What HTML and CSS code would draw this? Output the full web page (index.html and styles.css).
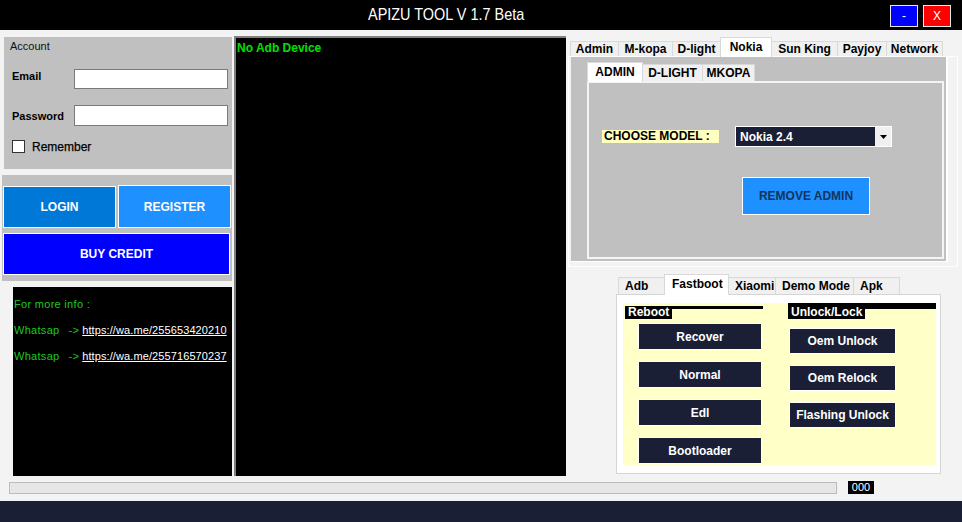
FILE: index.html
```html
<!DOCTYPE html>
<html>
<head>
<meta charset="utf-8">
<title>APIZU TOOL</title>
<link rel="stylesheet" href="styles.css">
</head>
<body>
<header class="titlebar">
  <span class="title">APIZU TOOL V 1.7 Beta</span>
  <div class="winbtns">
    <span class="wb wb-min">-</span>
    <span class="wb wb-close">X</span>
  </div>
</header>
<main class="main">
  <section class="leftcol">
    <div class="account">
      <div class="acc-title">Account</div>
      <div class="frow frow-email"><span class="flabel">Email</span><span class="finput"></span></div>
      <div class="frow frow-pass"><span class="flabel">Password</span><span class="finput"></span></div>
      <div class="crow"><span class="cbox"></span><span class="clabel">Remember</span></div>
    </div>
    <div class="actions">
      <button class="btn btn-login">LOGIN</button>
      <button class="btn btn-register">REGISTER</button>
      <button class="btn btn-buy">BUY CREDIT</button>
    </div>
    <div class="info">
      <p class="info-line">For more info :</p>
      <p class="info-line"><span>Whatsap</span><span class="arrow">-&gt;</span><span class="link">https://wa.me/255653420210</span></p>
      <p class="info-line"><span>Whatsap</span><span class="arrow">-&gt;</span><span class="link">https://wa.me/255716570237</span></p>
    </div>
  </section>

  <section class="console">
    <div class="console-text">No Adb Device</div>
  </section>

  <section class="rightcol">
    <div class="tabctl tabctl-top">
      <div class="tabstrip strip-top">
        <span class="tab w-admin">Admin</span>
        <span class="tab w-mkopa">M-kopa</span>
        <span class="tab w-dlight">D-light</span>
        <span class="tab tab-sel w-nokia">Nokia</span>
        <span class="tab w-sunking">Sun King</span>
        <span class="tab w-payjoy">Payjoy</span>
        <span class="tab w-network">Network</span>
      </div>
      <div class="page-top">
        <div class="gray-panel">
          <div class="tabstrip strip-inner">
            <span class="tab tab-sel itab w-iadmin">ADMIN</span>
            <span class="tab itab w-idlight">D-LIGHT</span>
            <span class="tab itab w-imkopa">MKOPA</span>
          </div>
          <div class="inner-page">
            <div class="model-row">
              <span class="model-label">CHOOSE MODEL :</span>
              <div class="combo">
                <span class="combo-text">Nokia 2.4</span>
                <span class="combo-arrow"><svg width="7" height="4" viewBox="0 0 7 4"><path d="M0 0h7L3.5 4z" fill="#000"/></svg></span>
              </div>
            </div>
            <button class="btn-remove">REMOVE ADMIN</button>
          </div>
        </div>
      </div>
    </div>

    <div class="tabctl tabctl-bottom">
      <div class="tabstrip strip-bottom">
        <span class="tab w-adb">Adb</span>
        <span class="tab tab-sel w-fastboot">Fastboot</span>
        <span class="tab w-xiaomi">Xiaomi</span>
        <span class="tab w-demo">Demo Mode</span>
        <span class="tab w-apk">Apk</span>
      </div>
      <div class="page-bottom">
        <div class="yellow">
          <div class="group group-reboot">
            <div class="ghead"><span class="glabel">Reboot</span><span class="gline"></span></div>
            <div class="gbtns">
              <button class="nbtn">Recover</button>
              <button class="nbtn">Normal</button>
              <button class="nbtn">Edl</button>
              <button class="nbtn">Bootloader</button>
            </div>
          </div>
          <div class="group group-unlock">
            <div class="ghead"><span class="glabel">Unlock/Lock</span><span class="gline"></span></div>
            <div class="gbtns">
              <button class="nbtn">Oem Unlock</button>
              <button class="nbtn">Oem Relock</button>
              <button class="nbtn">Flashing Unlock</button>
            </div>
          </div>
        </div>
      </div>
    </div>
  </section>
</main>
<div class="progress-row">
  <div class="progress"></div>
  <span class="counter">000</span>
</div>
<footer class="footer"></footer>
</body>
</html>
```

FILE: styles.css
```css
* { box-sizing: border-box; }
html, body { margin: 0; padding: 0; }
body {
  width: 962px;
  height: 522px;
  overflow: hidden;
  background: #f3f3f3;
  font-family: "Liberation Sans", Arial, sans-serif;
  color: #000;
}
button { font-family: inherit; cursor: default; }

/* title bar */
.titlebar {
  height: 30px;
  background: #000;
  display: flex;
  align-items: center;
}
.title {
  color: #fff;
  font-size: 17px;
  margin-left: 368px;
  display: inline-block;
  transform: scaleX(0.85);
  transform-origin: left center;
  white-space: nowrap;
}
.winbtns {
  margin-left: auto;
  margin-right: 11px;
  display: flex;
  gap: 5px;
  align-self: flex-start;
  margin-top: 5px;
}
.wb {
  width: 28px;
  height: 22px;
  color: #fff;
  font-size: 12px;
  display: flex;
  align-items: center;
  justify-content: center;
  border: 1px solid #e8e8e8;
}
.wb-min { background: #0000ff; }
.wb-close { background: #ff0000; }

/* main */
.main {
  height: 446px;
  display: flex;
  align-items: flex-start;
}

.leftcol { width: 233px; flex: none; }
.account {
  margin: 7px 0 0 4px;
  width: 228px;
  height: 132px;
  background: #c0c0c0;
  padding-top: 2px;
}
.acc-title {
  font-size: 11px;
  line-height: 14px;
  padding-left: 6px;
  color: #111;
}
.frow {
  display: flex;
  align-items: center;
  padding-left: 8px;
}
.frow-email { margin-top: 16px; height: 20px; }
.frow-pass { margin-top: 16px; height: 21px; }
.frow-email .flabel { margin-top: -6px; }
.flabel {
  width: 62px;
  font-size: 11px;
  font-weight: bold;
}
.finput {
  width: 154px;
  height: 100%;
  background: #fff;
  border: 1px solid #7a7a7a;
}
.crow {
  margin-top: 14px;
  padding-left: 8px;
  display: flex;
  align-items: center;
  height: 13px;
}
.cbox {
  width: 13px;
  height: 13px;
  background: #fff;
  border: 1px solid #333;
}
.clabel {
  margin-left: 7px;
  font-size: 12px;
  -webkit-text-stroke: 0.25px #000;
}

.actions {
  margin: 6px 0 0 2px;
  width: 230px;
  height: 106px;
  background: #c0c0c0;
  padding: 11px 0 0 1px;
  display: grid;
  grid-template-columns: 113px 113px;
  grid-template-rows: 42px 42px;
  column-gap: 2px;
  row-gap: 5px;
}
.btn {
  border: 1px solid #fff;
  color: #fff;
  font-size: 12px;
  font-weight: bold;
  padding: 0;
  margin: 0;
}
.btn-login { background: #0078d7; }
.btn-register { background: #1e90ff; height: 43px; margin-top: -1px; }
.btn-buy { background: #0000ff; grid-column: 1 / 3; width: 227px; }

.info {
  margin: 6px 0 0 13px;
  width: 219px;
  height: 189px;
  background: #000;
  padding: 11px 0 0 1px;
  color: #1ec81e;
  font-size: 11px;
  letter-spacing: 0.3px;
}
.info-line {
  margin: 0 0 13px 0;
  line-height: 13px;
  white-space: nowrap;
}
.arrow { margin-left: 9px; }
.link {
  margin-left: 3px;
  color: #fff;
  text-decoration: underline;
  letter-spacing: 0.1px;
}

/* console */
.console {
  flex: none;
  margin: 6px 0 0 1px;
  width: 332px;
  height: 440px;
  background: #000;
  border-top: 2px solid #808080;
  border-left: 2px solid #808080;
  padding: 3px 0 0 1px;
}
.console-text {
  color: #00e000;
  font-weight: bold;
  font-size: 12px;
  line-height: 14px;
}

/* right column */
.rightcol {
  flex: none;
  width: 390px;
  margin-left: 2px;
  padding-top: 7px;
}
.tabstrip {
  display: flex;
  align-items: flex-end;
  padding-left: 2px;
  position: relative;
  z-index: 1;
}
.tab {
  height: 15px;
  background: #f0f0f0;
  border: 1px solid #d9d9d9;
  border-bottom: none;
  margin-right: -1px;
  font-size: 12px;
  font-weight: bold;
  display: flex;
  align-items: center;
  justify-content: center;
  white-space: nowrap;
}
.tab-sel {
  background: #fff;
  margin-bottom: -1px;
}
.strip-top { height: 19px; }
.strip-top .tab { height: 15px; }
.strip-top .tab-sel { height: 20px; padding-bottom: 2px; }
.w-admin { width: 49px; }
.w-mkopa { width: 55px; }
.w-dlight { width: 49px; }
.w-nokia { width: 52px; }
.w-sunking { width: 67px; }
.w-payjoy { width: 50px; }
.w-network { width: 57px; }

.page-top {
  width: 390px;
  height: 211px;
  border: 1px solid #fdfdfd;
  padding: 0 9px 4px 2px;
}
.gray-panel {
  height: 100%;
  background: #c0c0c0;
  border-right: 2px solid #fff;
  border-bottom: 1px solid #fff;
  padding: 5px 2px 2px 16px;
}
.strip-inner { height: 19px; padding-left: 0; }
.strip-inner .tab { height: 17px; }
.strip-inner .tab-sel { height: 20px; padding-bottom: 1px; }
.w-iadmin { width: 56px; }
.w-idlight { width: 61px; }
.w-imkopa { width: 53px; }

.inner-page {
  width: 357px;
  height: 178px;
  border: 2px solid #f4f4f4;
  background: #c0c0c0;
  padding: 43px 0 0 13px;
}
.model-row {
  display: flex;
  align-items: center;
  height: 21px;
}
.model-label {
  width: 117px;
  height: 13px;
  line-height: 13px;
  background: #ffffc0;
  font-size: 12px;
  font-weight: bold;
  padding-left: 2px;
  white-space: nowrap;
}
.combo {
  margin-left: 16px;
  width: 157px;
  height: 21px;
  border: 1px solid #fff;
  background: #1a1f36;
  display: flex;
  align-items: center;
}
.combo-text {
  flex: 1;
  color: #fff;
  font-size: 12px;
  font-weight: bold;
  padding-left: 4px;
}
.combo-arrow {
  width: 16px;
  height: 100%;
  background: #f0f0f0;
  display: flex;
  align-items: center;
  justify-content: center;
}
.btn-remove {
  display: block;
  margin: 30px 0 0 140px;
  width: 128px;
  height: 38px;
  background: #1e90ff;
  border: 1px solid #fff;
  color: #103560;
  font-size: 12px;
  font-weight: bold;
  padding: 0;
}

/* bottom tabs */
.tabctl-bottom {
  margin: 7px 0 0 48px;
  width: 325px;
}
.strip-bottom { height: 20px; }
.strip-bottom .tab { height: 17px; justify-content: flex-start; padding-left: 6px; }
.strip-bottom .tab-sel { height: 21px; padding-bottom: 3px; padding-left: 7px; }
.w-adb { width: 47px; }
.w-fastboot { width: 65px; }
.w-xiaomi { width: 48px; }
.w-demo { width: 79px; }
.w-apk { width: 47px; }

.page-bottom {
  width: 325px;
  height: 180px;
  background: #fff;
  border: 1px solid #d5d5d5;
  padding: 8px 4px 8px 6px;
}
.yellow {
  height: 162px;
  background: #ffffc8;
  display: flex;
  align-items: flex-start;
  padding-left: 2px;
}
.group-reboot { width: 138px; margin-top: 3px; }
.group-unlock { width: 148px; margin-left: 25px; }
.ghead {
  display: flex;
  align-items: flex-start;
}
.glabel {
  background: #000;
  color: #fff;
  font-size: 12px;
  font-weight: bold;
  white-space: nowrap;
  padding: 0 3px 0 3px;
}
.gline { flex: 1; background: #000; }
.group-reboot .glabel { height: 13px; line-height: 13px; }
.group-reboot .gline { height: 3px; }
.group-unlock .glabel { height: 16px; line-height: 18px; }
.group-unlock .gline { height: 6px; }

.gbtns {
  display: flex;
  flex-direction: column;
  gap: 11px;
}
.nbtn {
  background: #1a1f36;
  border: 1px solid #fff;
  color: #fff;
  font-size: 12px;
  font-weight: bold;
  padding: 0;
  margin: 0;
}
.group-reboot .gbtns { margin: 4px 0 0 13px; }
.group-reboot .nbtn { width: 124px; height: 27px; }
.group-unlock .gbtns { margin: 9px 0 0 1px; }
.group-unlock .nbtn { width: 107px; height: 26px; }

/* progress */
.progress-row {
  margin-top: 5px;
  height: 13px;
  display: flex;
  align-items: center;
}
.progress {
  margin-left: 9px;
  width: 828px;
  height: 12px;
  background: #e6e6e6;
  border: 1px solid #bcbcbc;
}
.counter {
  margin-left: 11px;
  width: 26px;
  height: 13px;
  background: #000;
  color: #fff;
  font-size: 11px;
  line-height: 13px;
  text-align: center;
}
.footer {
  margin-top: 7px;
  height: 21px;
  background: #1a1f36;
}
```
